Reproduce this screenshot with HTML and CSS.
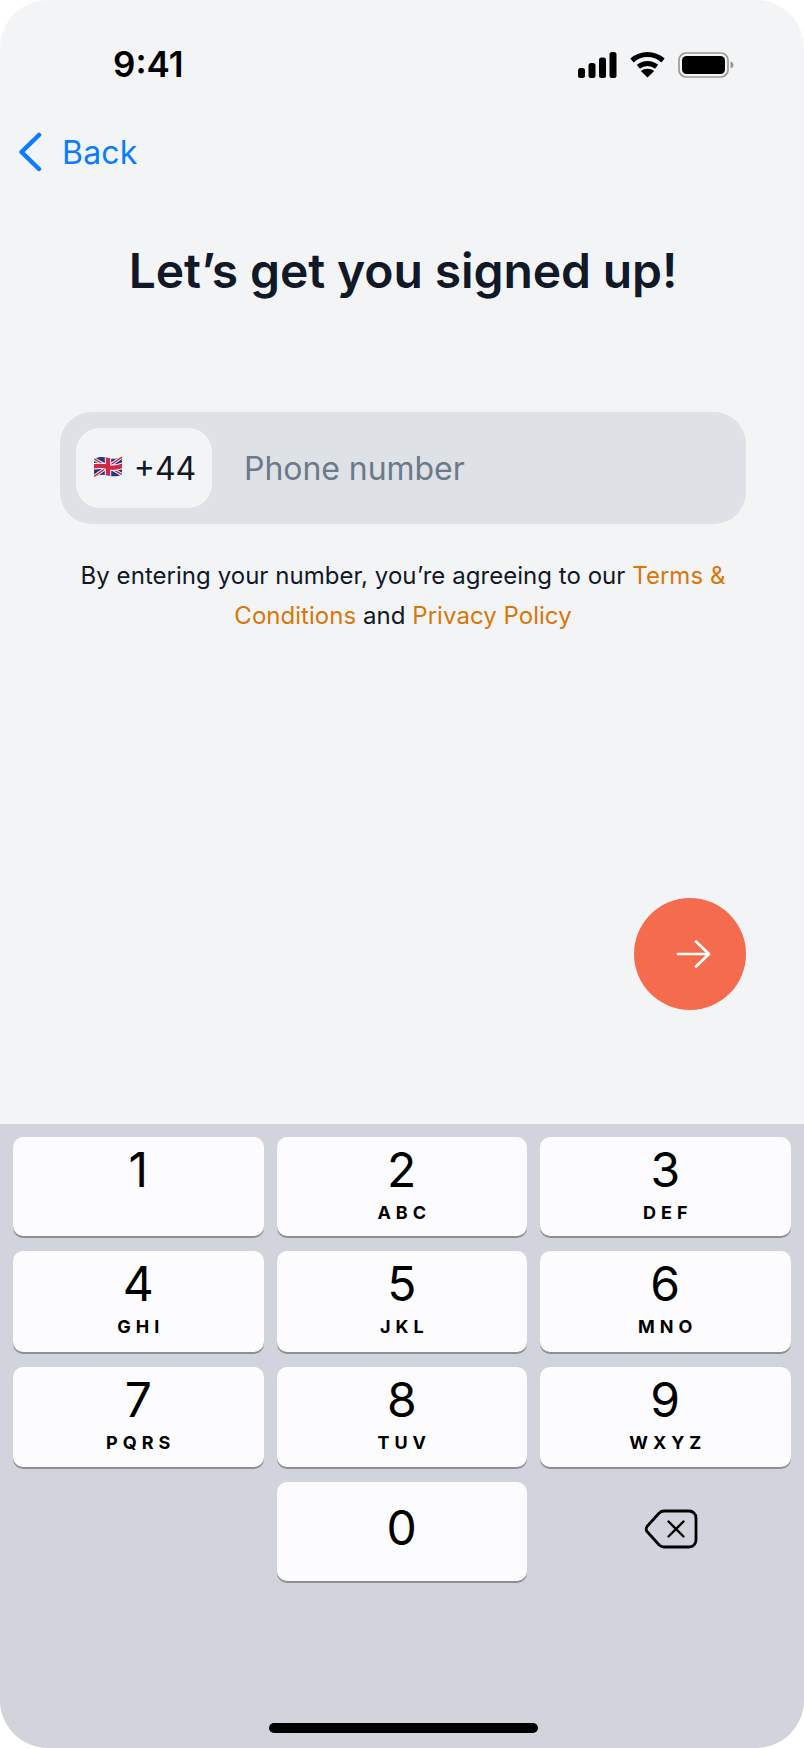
FILE: index.html
```html
<!DOCTYPE html>
<html>

<head>
    <title>Sign up</title>
    <meta name="viewport" content="width=device-width, initial-scale=1">
    <link rel="stylesheet" href="styles.css">
</head>

<body>
<div class="phone">

    <div class="status-bar">
        <span class="time">9:41</span>
        <div class="status-icons">
            <svg class="signal" width="39" height="26" viewBox="0 0 39 26">
                <rect x="0" y="16" width="7" height="10" rx="2.5"/>
                <rect x="10.5" y="11" width="7" height="15" rx="2.5"/>
                <rect x="21" y="5.5" width="7" height="20.5" rx="2.5"/>
                <rect x="31.5" y="0" width="7" height="26" rx="2.5"/>
            </svg>
            <svg class="wifi" width="35" height="26" viewBox="0 0 35 26">
                <path d="M2 8.5C11 .6 24 .6 33 8.5" fill="none" stroke="#000" stroke-width="5" stroke-linecap="butt"/>
                <path d="M8.4 14.8C13.800 10.400 21.200 10.400 26.600 14.800" fill="none" stroke="#000" stroke-width="5"/>
                <path d="M17.500 25.500L10.800 19C14.800 16 20.200 16 24.200 19Z"/>
            </svg>
            <svg class="battery" width="56" height="26" viewBox="0 0 56 26">
                <rect x="1" y="1" width="49" height="24" rx="7" fill="none" stroke="#999" stroke-width="1.700"/>
                <rect x="4" y="4" width="43" height="18" rx="4.500"/>
                <path d="M52.500 9.500C54.500 10 55.500 11.400 55.500 13C55.500 14.600 54.500 16 52.500 16.500Z" fill="#999"/>
            </svg>
        </div>
    </div>

    <a class="back" href="#">
        <svg width="24" height="40" viewBox="0 0 24 40">
            <path d="M21 3L3.500 20L21 37" fill="none" stroke="#0a7cff" stroke-width="4.500" stroke-linecap="round" stroke-linejoin="round"/>
        </svg>
        <span>Back</span>
    </a>

    <h1 class="title">Let’s get you signed up!</h1>

    <div class="phone-input">
        <div class="country">
            <svg class="flag" width="30" height="22" viewBox="0 0 30 22">
                <defs>
                    <clipPath id="cloth"><path d="M1 3C6 .5 10 .5 15 2C20 3.500 25 3 29 .5V18.500C25 20.500 20 21 15 19.500C10 18 6 18.500 1 21Z"/></clipPath>
                </defs>
                <g clip-path="url(#cloth)">
                    <rect width="30" height="22" fill="#24367f"/>
                    <path d="M1 3L29 18.500M29 1L1 20.500" stroke="#fff" stroke-width="3.200"/>
                    <path d="M1 3L29 18.500M29 1L1 20.500" stroke="#cf2a45" stroke-width="1.500"/>
                    <path d="M15 0V22M0 10.500C6 9.500 10 9.500 15 11C20 12.500 25 11.500 30 9.500" fill="none" stroke="#fff" stroke-width="6.400"/>
                    <path d="M15 0V22M0 10.500C6 9.500 10 9.500 15 11C20 12.500 25 11.500 30 9.500" fill="none" stroke="#cf2a45" stroke-width="4.400"/>
                </g>
            </svg>
            <span>+44</span>
        </div>
        <span class="placeholder">Phone number</span>
    </div>

    <p class="terms">By entering your number, you’re agreeing to our <a href="#">Terms &amp;</a> <a href="#">Conditions</a> and <a href="#">Privacy Policy</a></p>

    <a class="next" href="#">
        <svg width="36" height="30" viewBox="0 0 36 30">
            <path d="M2 15H33M20 2.500L33 15L20 27.500" fill="none" stroke="#fff" stroke-width="2.700" stroke-linecap="round" stroke-linejoin="round"/>
        </svg>
    </a>

    <div class="keyboard">
        <div class="keys">
            <div class="key"><span class="digit">1</span></div>
            <div class="key"><span class="digit">2</span><span class="letters">ABC</span></div>
            <div class="key"><span class="digit">3</span><span class="letters">DEF</span></div>
            <div class="key"><span class="digit">4</span><span class="letters">GHI</span></div>
            <div class="key"><span class="digit">5</span><span class="letters">JKL</span></div>
            <div class="key"><span class="digit">6</span><span class="letters">MNO</span></div>
            <div class="key"><span class="digit">7</span><span class="letters">PQRS</span></div>
            <div class="key"><span class="digit">8</span><span class="letters">TUV</span></div>
            <div class="key"><span class="digit">9</span><span class="letters">WXYZ</span></div>
            <div class="key-empty"></div>
            <div class="key key-zero"><span class="digit">0</span></div>
            <div class="key-empty delete">
                <svg width="54" height="40" viewBox="0 0 54 40">
                    <path d="M20 2H45C49 2 52 5 52 9V31C52 35 49 38 45 38H20C18 38 16.500 37.200 15.200 36L3 22.500C2 21 2 19 3 17.500L15.200 4C16.500 2.800 18 2 20 2Z" fill="none" stroke="#000" stroke-width="2.800" stroke-linejoin="round"/>
                    <path d="M24.500 12.500L39.500 27.500M39.500 12.500L24.500 27.500" fill="none" stroke="#000" stroke-width="2.400" stroke-linecap="round"/>
                </svg>
            </div>
        </div>
        <div class="home-indicator"></div>
    </div>

</div>
</body>
</html>
```

FILE: styles.css
```css
* {
  box-sizing: border-box;
}

body {
  margin: 0;
  background-color: #fff;
  font-family: "Inter", "Liberation Sans", sans-serif;
}

a {
  text-decoration: none;
}

.phone {
  width: 804px;
  height: 1748px;
  border-radius: 48px;
  overflow: hidden;
  background-color: #f3f4f6;
  display: flex;
  flex-direction: column;
}

/* Status bar */
.status-bar {
  height: 130px;
  padding: 44px 70px 0 113px;
  display: flex;
  justify-content: space-between;
  align-items: flex-start;
}

.time {
  font-size: 35px;
  font-weight: 600;
  line-height: 40px;
  color: #000;
}

.status-icons {
  display: flex;
  align-items: center;
  gap: 13px;
  padding-top: 8px;
}

/* Back link */
.back {
  height: 44px;
  padding-left: 18px;
  display: flex;
  align-items: center;
  gap: 20px;
  color: #0a7cff;
  font-size: 32px;
  letter-spacing: 0.2px;
}

/* Heading */
.title {
  margin: 67px 0 0;
  padding-left: 2px;
  text-align: center;
  font-size: 48px;
  line-height: 60px;
  font-weight: 600;
  letter-spacing: -0.1px;
  color: #111827;
}

/* Phone number field */
.phone-input {
  margin: 111px 58px 0 60px;
  height: 112px;
  padding: 16px;
  border-radius: 32px;
  background-color: #dee1e6;
  display: flex;
  align-items: center;
  gap: 32px;
}

.country {
  width: 136px;
  height: 80px;
  border-radius: 24px;
  background-color: #f3f4f6;
  display: flex;
  align-items: center;
  justify-content: center;
  gap: 11px;
  font-size: 32px;
  color: #111827;
}

.flag {
  margin: 0 0 2px 1px;
}

.placeholder {
  font-size: 32px;
  letter-spacing: -0.05px;
  color: #6b7a8a;
}

.terms {
  margin: 32px 59px 0 61px;
  text-align: center;
  font-size: 24px;
  line-height: 40px;
  letter-spacing: 0.04px;
  color: #111827;
}

.terms a {
  color: #d97706;
}

/* Next button */
.next {
  align-self: flex-end;
  margin: 262px 58px 0 0;
  width: 112px;
  height: 112px;
  padding-left: 8px;
  border-radius: 50%;
  background-color: #f56b4e;
  display: flex;
  align-items: center;
  justify-content: center;
}

/* Number pad */
.keyboard {
  margin-top: auto;
  height: 624px;
  padding: 13px 13px 0;
  background-color: #d1d4dc;
  display: flex;
  flex-direction: column;
}

.keys {
  display: grid;
  grid-template-columns: 250.5px 250.5px 250.5px;
  grid-template-rows: 99px 101px 100px 99px;
  column-gap: 13px;
  row-gap: 15px;
}

.key {
  background-color: #fcfcfe;
  border-radius: 10px;
  box-shadow: 0 2px 0 #8e8e93;
  display: flex;
  flex-direction: column;
  align-items: center;
}

.key-zero {
  justify-content: center;
  padding-bottom: 11px;
}

.digit {
  margin-top: 4px;
  font-size: 48px;
  line-height: 58px;
  color: #000;
}

.letters {
  margin-top: 3px;
  font-size: 18px;
  line-height: 22px;
  font-weight: 700;
  letter-spacing: 5px;
  padding-left: 5px;
  color: #000;
}

.delete {
  display: flex;
  align-items: center;
  justify-content: center;
  padding-bottom: 5px;
  padding-left: 11px;
}

.home-indicator {
  align-self: center;
  margin: auto 0 15px 3px;
  width: 269px;
  height: 10px;
  border-radius: 5px;
  background-color: #000;
}
```
